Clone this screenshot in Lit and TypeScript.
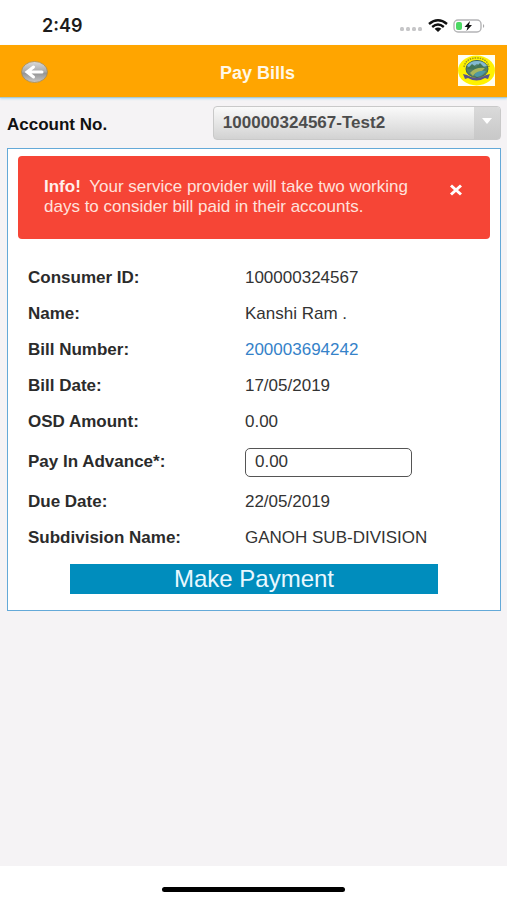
import { LitElement, html, css } from "lit";
import { customElement, state } from "lit/decorators.js";

interface BillField {
  label: string;
  value: string;
  kind?: "link" | "input";
}

@customElement("status-bar")
class StatusBar extends LitElement {
  static styles = css`
    :host {
      display: flex;
      align-items: center;
      justify-content: space-between;
      height: 45px;
      padding: 6px 20px 0 42px;
      box-sizing: border-box;
      background: #fff;
      color: #1c1c1c;
    }
    .time {
      font: 600 18px/24px Inter, "Liberation Sans", sans-serif;
    }
    svg {
      display: block;
    }
  `;

  render() {
    return html`
      <span class="time">2:49</span>
      <svg width="88" height="16" viewBox="0 0 88 16" aria-hidden="true">
        <g fill="#c6c6c8">
          <rect x="1" y="9" width="4" height="4" rx="1.500" />
          <rect x="7" y="9" width="4" height="4" rx="1.500" />
          <rect x="13" y="9" width="4" height="4" rx="1.500" />
          <rect x="19" y="9" width="4" height="4" rx="1.500" />
        </g>
        <g fill="none" stroke="#111" stroke-width="2.4">
          <path d="M30 6 Q39 -1.600 48 6" />
          <path d="M33.200 9 Q39 4.200 44.800 9" />
        </g>
        <path d="M35.600 10.800 Q39 8.400 42.400 10.800 L39 14 Z" fill="#111" />
        <rect x="55" y="2" width="27" height="12" rx="4" fill="#fff" stroke="#b4b4b6" stroke-width="1.400" />
        <rect x="57" y="4" width="6" height="8" rx="2" fill="#4cd964" />
        <path d="M71 3 L65.500 9 H68.500 L67.500 13 L73 7 H70 Z" fill="#111" stroke="#fff" stroke-width="1.600" paint-order="stroke" />
        <path d="M84 6 Q86.500 8 84 10 Z" fill="#a9a9ab" />
      </svg>
    `;
  }
}

@customElement("title-bar")
class TitleBar extends LitElement {
  static styles = css`
    :host {
      display: grid;
      grid-template-columns: 1fr auto 1fr;
      align-items: center;
      height: 53px;
      padding: 0 12px 2px 20px;
      box-sizing: border-box;
      background: #ffa500;
      border-bottom: 1px solid #a9cbd2;
      box-shadow: 0 1px 2px #b5dcf2;
      position: relative;
    }
    .back {
      justify-self: start;
      padding: 4px 0 0;
      border: 0;
      background: none;
    }
    .crest {
      justify-self: end;
    }
    h1 {
      margin: 0;
      padding-top: 6px;
      font-size: 18px;
      line-height: 24px;
      color: #fff8e8;
    }
    svg {
      display: block;
    }
  `;

  render() {
    return html`
      <button class="back" aria-label="Back">
        <svg width="28" height="24" viewBox="0 0 28 24">
          <defs>
            <linearGradient id="disc" x1="0" y1="0" x2="0" y2="1">
              <stop offset="0" stop-color="#dadada" />
              <stop offset="0.500" stop-color="#a8a8a8" />
              <stop offset="0.550" stop-color="#949494" />
              <stop offset="1" stop-color="#c8c8c8" />
            </linearGradient>
          </defs>
          <ellipse cx="14.500" cy="12" rx="13" ry="10.500" fill="url(#disc)" stroke="#a88a4c" stroke-width="0.800" />
          <path d="M13.500 7 L7 12 L13.500 17 M8 12 H22" fill="none" stroke="#fff" stroke-width="3" stroke-linecap="round" />
        </svg>
      </button>
      <h1>Pay Bills</h1>
      <svg class="crest" width="37" height="31" viewBox="0 0 37 31" role="img" aria-label="Department crest">
        <rect width="37" height="31" fill="#fffef0" />
        <ellipse cx="18.500" cy="15.500" rx="18.500" ry="15" fill="#fff200" />
        <path d="M6 12 Q8 3 18.500 3 Q29 3 31 12" fill="none" stroke="#9b9520" stroke-width="1.500" stroke-dasharray="1.500 1" />
        <ellipse cx="19" cy="14" rx="11" ry="8.500" fill="#537f68" stroke="#3a625d" stroke-width="1" />
        <path d="M9 11 Q12 6 19 6 Q26 6 29 11 L24 12 L19 9 L13 13 Z" fill="#83bad1" />
        <path d="M9 14 L14 9 L18 12 L22 8 L28 14 L20 15 Z" fill="#427557" />
        <path d="M12 18 Q17 12 27 13 L23 17 Q17 17 15 21 Z" fill="#a9b65b" />
        <path d="M16 20 Q20 15 28 16 Q25 21 19 22 Z" fill="#4e98a7" />
        <path d="M5 19 L9 20 Q18.500 26 28 20 L32 19 L30 24 L27 23 Q18.500 28 10 23 L7 24 Z" fill="#59558c" />
      </svg>
    `;
  }
}

@customElement("app-root")
class AppRoot extends LitElement {
  static styles = css`
    :host {
      display: flex;
      flex-direction: column;
      min-height: 100vh;
      background: #f5f3f5;
      color: #333;
      font: 17px/20px "Liberation Sans", Arial, sans-serif;
    }
    main {
      flex: 1;
      padding: 8px 6px 16px 7px;
    }
    .account {
      display: grid;
      grid-template-columns: 5fr 7fr;
      align-items: center;
      margin-bottom: 8px;
    }
    .account label {
      padding-top: 4px;
      font-weight: bold;
      color: #111;
    }
    .picker {
      display: grid;
      grid-template-columns: 1fr 26px;
      height: 34px;
      box-sizing: border-box;
      border: 1px solid #c9c9c9;
      border-radius: 4px;
      overflow: hidden;
      background: linear-gradient(#fafafa, #d2d2d2);
    }
    .picker select {
      grid-area: 1 / 1 / 2 / 3;
      appearance: none;
      min-width: 0;
      padding: 0 28px 0 9px;
      border: 0;
      background: none;
      font: bold 17px/20px "Liberation Sans", Arial, sans-serif;
      color: #4d4d4d;
    }
    .arrow {
      grid-area: 1 / 2 / 2 / 3;
      display: grid;
      place-items: center;
      background: linear-gradient(#dadada, #c8c8c8);
      pointer-events: none;
      padding-bottom: 4px;
    }
    .card {
      padding: 7px 10px 16px;
      border: 1px solid #64a9d8;
      background: #fff;
    }
    .alert {
      display: flex;
      align-items: flex-start;
      justify-content: space-between;
      gap: 16px;
      padding: 21px 27px 22px 26px;
      border-radius: 4px;
      background: #f64536;
      color: #ffe1dc;
    }
    .alert p {
      margin: 0;
      max-width: 376px;
    }
    .alert strong {
      margin-right: 4px;
      color: #fff0ec;
    }
    .close {
      padding: 7px 0;
      border: 0;
      background: none;
    }
    .fields {
      margin: 21px 10px 8px;
    }
    .field {
      display: grid;
      grid-template-columns: 48% 52%;
      align-items: center;
      min-height: 36px;
    }
    .field.entry {
      min-height: 44px;
    }
    .field label,
    .field .name {
      font-weight: bold;
      color: #2b2b2b;
    }
    .field a {
      color: #3582c9;
      text-decoration: none;
    }
    .field input {
      width: 71%;
      height: 29px;
      box-sizing: border-box;
      padding: 0 9px;
      border: 1px solid #555;
      border-radius: 5px;
      background: #fff;
      font: inherit;
      color: inherit;
    }
    .pay {
      display: block;
      width: 78%;
      height: 30px;
      margin: 0 auto;
      padding: 0;
      border: 0;
      background: #008dbd;
      color: #e9f8ff;
      font: 24px/30px "Liberation Sans", Arial, sans-serif;
    }
    footer {
      display: grid;
      place-items: center;
      height: 34px;
      padding-top: 13px;
      box-sizing: border-box;
      background: #fff;
    }
    .home {
      width: 36%;
      height: 5px;
      border-radius: 3px;
      background: #000;
    }
    svg {
      display: block;
    }
  `;

  @state() private alertOpen = true;

  private fields: BillField[] = [
    { label: "Consumer ID:", value: "100000324567" },
    { label: "Name:", value: "Kanshi Ram ." },
    { label: "Bill Number:", value: "200003694242", kind: "link" },
    { label: "Bill Date:", value: "17/05/2019" },
    { label: "OSD Amount:", value: "0.00" },
    { label: "Pay In Advance*:", value: "0.00", kind: "input" },
    { label: "Due Date:", value: "22/05/2019" },
    { label: "Subdivision Name:", value: "GANOH SUB-DIVISION" },
  ];

  private renderField(field: BillField) {
    if (field.kind === "input") {
      return html`<div class="field entry">
        <label for="advance">${field.label}</label>
        <input id="advance" type="text" inputmode="decimal" .value=${field.value} />
      </div>`;
    }
    return html`<div class="field">
      <span class="name">${field.label}</span>
      ${field.kind === "link"
        ? html`<a href="#bill">${field.value}</a>`
        : html`<span>${field.value}</span>`}
    </div>`;
  }

  render() {
    return html`
      <status-bar></status-bar>
      <title-bar></title-bar>
      <main>
        <div class="account">
          <label for="account">Account No.</label>
          <div class="picker">
            <select id="account">
              <option>100000324567-Test2</option>
            </select>
            <span class="arrow">
              <svg width="10" height="7" viewBox="0 0 10 7"><path d="M0 0 H10 L5 6 Z" fill="#fff" /></svg>
            </span>
          </div>
        </div>
        <section class="card">
          ${this.alertOpen
            ? html`<div class="alert" role="alert">
                <p><strong>Info!</strong> Your service provider will take two working days to consider bill paid in their accounts.</p>
                <button class="close" aria-label="Close" @click=${() => (this.alertOpen = false)}>
                  <svg width="14" height="12" viewBox="0 0 14 12">
                    <path d="M2 1.500 L12 10.500 M12 1.500 L2 10.500" stroke="#fff" stroke-width="3" />
                  </svg>
                </button>
              </div>`
            : ""}
          <div class="fields">${this.fields.map((field) => this.renderField(field))}</div>
          <button class="pay">Make Payment</button>
        </section>
      </main>
      <footer><div class="home"></div></footer>
    `;
  }
}
